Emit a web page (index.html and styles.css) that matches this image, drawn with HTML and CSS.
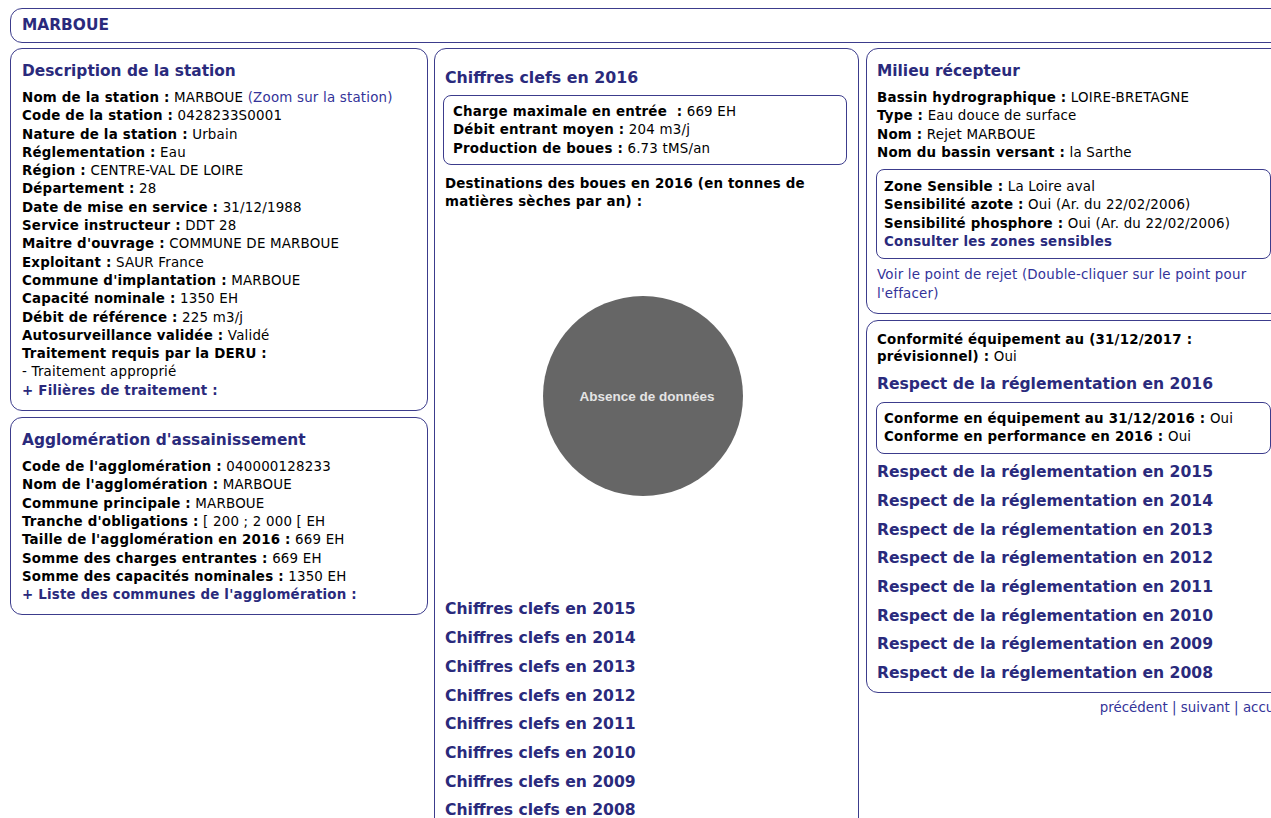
FILE: index.html
```html
<!DOCTYPE html>
<html lang="fr">
<head>
<meta charset="utf-8">
<title>MARBOUE</title>
<link rel="stylesheet" href="styles.css">
</head>
<body>
<div class="page">
  <div class="box header">MARBOUE</div>

  <div class="columns">
    <div class="col">
      <div class="box panel">
        <h2 class="title">Description de la station</h2>
        <div class="lines">
          <div><b>Nom de la station :</b> MARBOUE <a class="link">(Zoom sur la station)</a></div>
          <div><b>Code de la station :</b> 0428233S0001</div>
          <div><b>Nature de la station :</b> Urbain</div>
          <div><b>Réglementation :</b> Eau</div>
          <div><b>Région :</b> CENTRE-VAL DE LOIRE</div>
          <div><b>Département :</b> 28</div>
          <div><b>Date de mise en service :</b> 31/12/1988</div>
          <div><b>Service instructeur :</b> DDT 28</div>
          <div><b>Maitre d'ouvrage :</b> COMMUNE DE MARBOUE</div>
          <div><b>Exploitant :</b> SAUR France</div>
          <div><b>Commune d'implantation :</b> MARBOUE</div>
          <div><b>Capacité nominale :</b> 1350 EH</div>
          <div><b>Débit de référence :</b> 225 m3/j</div>
          <div><b>Autosurveillance validée :</b> Validé</div>
          <div><b>Traitement requis par la DERU :</b></div>
          <div>- Traitement approprié</div>
          <div><a class="toggle">+ Filières de traitement :</a></div>
        </div>
      </div>

      <div class="box panel">
        <h2 class="title">Agglomération d'assainissement</h2>
        <div class="lines">
          <div><b>Code de l'agglomération :</b> 040000128233</div>
          <div><b>Nom de l'agglomération :</b> MARBOUE</div>
          <div><b>Commune principale :</b> MARBOUE</div>
          <div><b>Tranche d'obligations :</b> [ 200 ; 2 000 [ EH</div>
          <div><b>Taille de l'agglomération en 2016 :</b> 669 EH</div>
          <div><b>Somme des charges entrantes :</b> 669 EH</div>
          <div><b>Somme des capacités nominales :</b> 1350 EH</div>
          <div><a class="toggle">+ Liste des communes de l'agglomération :</a></div>
        </div>
      </div>
    </div>

    <div class="col">
      <div class="box panel panel-narrow panel-tall">
        <h2 class="title title-year">Chiffres clefs en 2016</h2>
        <div class="box inner figures">
          <div><b>Charge maximale en entrée &nbsp;:</b> 669 EH</div>
          <div><b>Débit entrant moyen :</b> 204 m3/j</div>
          <div><b>Production de boues :</b> 6.73 tMS/an</div>
        </div>
        <p class="lines dest"><b>Destinations des boues en 2016 (en tonnes de matières sèches par an) :</b></p>
        <div class="chart">
          <svg width="400" height="384" viewBox="0 0 400 384">
            <circle cx="198" cy="185" r="100" fill="#666666"/>
            <text x="202" y="190" text-anchor="middle" class="chart-label">Absence de données</text>
          </svg>
        </div>
        <div class="year-links">
          <a class="year">Chiffres clefs en 2015</a>
          <a class="year">Chiffres clefs en 2014</a>
          <a class="year">Chiffres clefs en 2013</a>
          <a class="year">Chiffres clefs en 2012</a>
          <a class="year">Chiffres clefs en 2011</a>
          <a class="year">Chiffres clefs en 2010</a>
          <a class="year">Chiffres clefs en 2009</a>
          <a class="year">Chiffres clefs en 2008</a>
        </div>
      </div>
    </div>

    <div class="col col-right">
      <div class="box panel panel-narrow">
        <h2 class="title">Milieu récepteur</h2>
        <div class="lines">
          <div><b>Bassin hydrographique :</b> LOIRE-BRETAGNE</div>
          <div><b>Type :</b> Eau douce de surface</div>
          <div><b>Nom :</b> Rejet MARBOUE</div>
          <div><b>Nom du bassin versant :</b> la Sarthe</div>
        </div>
        <div class="box inner zone">
          <div><b>Zone Sensible :</b> La Loire aval</div>
          <div><b>Sensibilité azote :</b> Oui (Ar. du 22/02/2006)</div>
          <div><b>Sensibilité phosphore :</b> Oui (Ar. du 22/02/2006)</div>
          <div><a class="toggle">Consulter les zones sensibles</a></div>
        </div>
        <p class="lines rejet"><a class="link">Voir le point de rejet (Double-cliquer sur le point pour l'effacer)</a></p>
      </div>

      <div class="box panel panel-narrow panel-rules">
        <p class="lines conform"><b>Conformité équipement au (31/12/2017 : prévisionnel) :</b> Oui</p>
        <a class="year">Respect de la réglementation en 2016</a>
        <div class="box inner rules-box">
          <div><b>Conforme en équipement au 31/12/2016 :</b> Oui</div>
          <div><b>Conforme en performance en 2016 :</b> Oui</div>
        </div>
        <div class="year-links">
          <a class="year">Respect de la réglementation en 2015</a>
          <a class="year">Respect de la réglementation en 2014</a>
          <a class="year">Respect de la réglementation en 2013</a>
          <a class="year">Respect de la réglementation en 2012</a>
          <a class="year">Respect de la réglementation en 2011</a>
          <a class="year">Respect de la réglementation en 2010</a>
          <a class="year">Respect de la réglementation en 2009</a>
          <a class="year">Respect de la réglementation en 2008</a>
        </div>
      </div>

      <div class="pager">
        <a class="link">précédent</a> | <a class="link">suivant</a> | <a class="link">accueil</a>
      </div>
    </div>
  </div>
</div>
</body>
</html>
```

FILE: styles.css
```css
html {
  overflow: hidden;
}

body {
  margin: 0;
  background: #ffffff;
  color: #000000;
  font-family: "DejaVu Sans", Verdana, sans-serif;
  font-size: 13.4px;
  letter-spacing: 0.2px;
}

.page {
  width: 1290px;
  padding: 8px 0 0 10px;
}

.box {
  border: 1px solid #3c3c8c;
  border-radius: 12px;
  background: #ffffff;
}

.header {
  padding: 7px 11px 8px;
  font-size: 15.4px;
  line-height: 18px;
  letter-spacing: 0;
  font-weight: bold;
  color: #2a2a7c;
}

.columns {
  display: grid;
  grid-template-columns: 418px 425px 418px;
  column-gap: 6px;
  margin-top: 5px;
  align-items: start;
}

.col {
  display: flex;
  flex-direction: column;
  gap: 6px;
}

.col-right {
  margin-left: 1px;
}

.panel {
  padding: 11px 11px 10px;
}

.panel-narrow {
  padding-left: 10px;
}

.title {
  margin: 0 0 7px;
  font-size: 15.4px;
  line-height: 22px;
  letter-spacing: 0;
  color: #2a2a7c;
}

.lines {
  line-height: 18.3px;
}

.link {
  color: #333399;
  text-decoration: none;
}

.toggle {
  color: #2a2a7c;
  font-weight: bold;
  text-decoration: none;
}

/* middle column: key figures and sludge chart */
.panel-tall {
  height: 800px;
}

.title-year {
  margin-top: 7px;
  margin-bottom: 6px;
  font-size: 15.8px;
}

.inner {
  border-radius: 8px;
  padding: 7px 9px 6px;
  line-height: 18.3px;
}

.figures {
  margin-left: -2px;
}

.dest {
  margin: 10px 0 0;
}

.chart {
  height: 384px;
}

.chart svg {
  display: block;
}

.chart-label {
  font-family: "Liberation Sans", Arial, sans-serif;
  font-size: 13.5px;
  font-weight: bold;
  letter-spacing: 0;
  fill: #e4e4e4;
}

.year-links {
  display: flex;
  flex-direction: column;
}

.year {
  display: block;
  font-size: 15.6px;
  line-height: 28.7px;
  letter-spacing: 0;
  font-weight: bold;
  color: #2a2a7c;
  text-decoration: none;
}

/* right column: receiving water and compliance */
.zone {
  margin: 7px 0 0 -1px;
  padding: 8px 8px 7px 7px;
}

.rejet {
  margin: 7px 0 0;
}

.panel-rules {
  padding-top: 10px;
  padding-bottom: 4px;
}

.conform {
  margin: 0 0 4px;
  line-height: 17.5px;
}

.rules-box {
  margin: 3px 0 4px -1px;
  padding: 7px 8px 7px 7px;
}

.pager {
  margin-right: -7px;
  text-align: right;
  line-height: 18px;
  letter-spacing: 0;
  color: #333399;
}
```
